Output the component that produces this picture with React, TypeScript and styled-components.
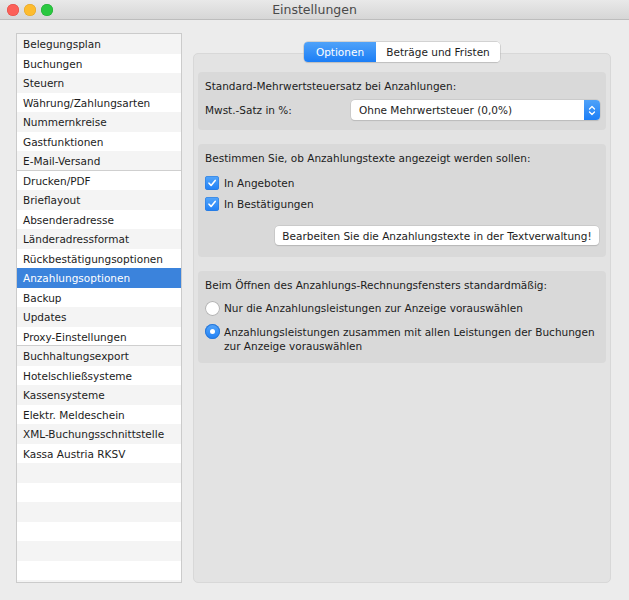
import React from "react";
import styled, { createGlobalStyle } from "styled-components";

const GlobalStyle = createGlobalStyle`
  html, body {
    margin: 0;
    padding: 0;
    background: #ececec;
  }
  body {
    font-family: "DejaVu Sans", "Liberation Sans", sans-serif;
    font-size: 10.5px;
    color: #1c1c1c;
  }
`;

const Window = styled.div`
  width: 629px;
  height: 600px;
  display: flex;
  flex-direction: column;
  background: #ececec;
  overflow: hidden;
`;

const TitleBar = styled.header`
  height: 19px;
  flex-shrink: 0;
  display: grid;
  grid-template-columns: 1fr auto 1fr;
  align-items: center;
  background: linear-gradient(#e9e9e9, #d6d6d6);
  border-bottom: 1px solid #bdbdbd;
`;

const Lights = styled.div`
  display: flex;
  gap: 5px;
  padding-left: 7px;
`;

const Light = styled.span<{ $color: string; $edge: string }>`
  width: 12px;
  height: 12px;
  border-radius: 50%;
  background: ${({ $color }) => $color};
  box-shadow: inset 0 0 0 0.5px ${({ $edge }) => $edge};
`;

const Title = styled.div`
  font-size: 12.5px;
  color: #4a4a4a;
`;

const Body = styled.main`
  flex: 1;
  display: flex;
  gap: 11px;
  padding: 13px 18px 17px 16px;
  min-height: 0;
`;

const Sidebar = styled.nav`
  width: 164px;
  border: 1px solid #cbcbcb;
  background: #fff;
  overflow: hidden;
`;

const Row = styled.div<{ $even: boolean; $active?: boolean; $separator?: boolean }>`
  box-sizing: border-box;
  height: 19.5px;
  padding: 1px 0 0 6px;
  line-height: 18.5px;
  white-space: nowrap;
  background: ${({ $active, $even }) =>
    $active ? "#3b83dc" : $even ? "#f4f4f4" : "#ffffff"};
  color: ${({ $active }) => ($active ? "#fff" : "#1c1c1c")};
  box-shadow: ${({ $separator }) =>
    $separator ? "inset 0 -1px 0 #cfcfcf" : "none"};
`;

const Content = styled.section`
  flex: 1;
  display: flex;
  flex-direction: column;
  padding-top: 9px;
`;

const Segmented = styled.div`
  align-self: center;
  display: flex;
  height: 20px;
  margin-bottom: -9px;
  position: relative;
  z-index: 1;
  border-radius: 4px;
  background: #fff;
  box-shadow: 0 0 0 0.5px #b8b8b8, 0 1px 1px rgba(0, 0, 0, 0.12);
  overflow: hidden;
`;

const Segment = styled.div<{ $active?: boolean; $width: number }>`
  width: ${({ $width }) => $width}px;
  display: flex;
  align-items: center;
  justify-content: center;
  color: ${({ $active }) => ($active ? "#fff" : "#1c1c1c")};
  background: ${({ $active }) =>
    $active ? "linear-gradient(#4fa2f9, #1c7ef6)" : "#fff"};
`;

const TabBox = styled.div`
  flex: 1;
  background: #e3e3e3;
  border: 1px solid #d8d8d8;
  border-radius: 5px;
  padding: 18px 4px;
  display: flex;
  flex-direction: column;
  gap: 14px;
`;

const Group = styled.div<{ $pt: number; $pb: number }>`
  background: #d9d9d9;
  border-radius: 4px;
  padding: ${({ $pt, $pb }) => `${$pt}px 6px ${$pb}px 7px`};
  display: flex;
  flex-direction: column;
`;

const GroupTitle = styled.div`
  line-height: 14px;
  height: 14px;
  white-space: nowrap;
`;

const FieldRow = styled.div`
  display: flex;
  align-items: center;
  margin-top: 7px;
`;

const FieldLabel = styled.div`
  width: 146px;
`;

const Select = styled.div`
  flex: 1;
  height: 20px;
  display: flex;
  align-items: center;
  background: #fff;
  border-radius: 4px;
  box-shadow: 0 0 0 0.5px #bdbdbd, 0 1px 1px rgba(0, 0, 0, 0.15);
  overflow: hidden;
`;

const SelectText = styled.div`
  flex: 1;
  padding-left: 8px;
`;

const Stepper = styled.div`
  width: 16px;
  height: 100%;
  display: flex;
  align-items: center;
  justify-content: center;
  background: linear-gradient(#4fa2f9, #1c7ef6);
`;

const CheckRow = styled.label`
  display: flex;
  align-items: center;
  gap: 5px;
  height: 21px;
`;

const CheckList = styled.div`
  margin-top: 7px;
  display: flex;
  flex-direction: column;
`;

const Box = styled.span`
  width: 14px;
  height: 14px;
  border-radius: 3px;
  display: flex;
  align-items: center;
  justify-content: center;
  background: linear-gradient(#55a6fa, #1f80f6);
  box-shadow: inset 0 0 0 0.5px #2a78d8;
`;

const ButtonRow = styled.div`
  display: flex;
  justify-content: flex-end;
  margin-top: 12px;
  padding-right: 1px;
`;

const Button = styled.div`
  width: 324px;
  height: 19px;
  display: flex;
  align-items: center;
  justify-content: center;
  background: #fff;
  border-radius: 4px;
  box-shadow: 0 0 0 0.5px #bcbcbc, 0 1px 1px rgba(0, 0, 0, 0.18);
  white-space: nowrap;
`;

const RadioList = styled.div`
  margin-top: 9px;
  display: flex;
  flex-direction: column;
  gap: 9px;
`;

const RadioRow = styled.label`
  display: flex;
  align-items: flex-start;
  gap: 4px;
  line-height: 14px;
`;

const Radio = styled.span<{ $checked?: boolean }>`
  width: 15px;
  height: 15px;
  flex-shrink: 0;
  margin-top: -0.5px;
  border-radius: 50%;
  display: flex;
  align-items: center;
  justify-content: center;
  background: ${({ $checked }) =>
    $checked ? "linear-gradient(#55a6fa, #1f80f6)" : "#fff"};
  box-shadow: inset 0 0 0 1px
    ${({ $checked }) => ($checked ? "#2a78d8" : "#b3b3b3")};

  &::after {
    content: "";
    display: ${({ $checked }) => ($checked ? "block" : "none")};
    width: 5px;
    height: 5px;
    border-radius: 50%;
    background: #fff;
  }
`;

const items = [
  "Belegungsplan",
  "Buchungen",
  "Steuern",
  "Währung/Zahlungsarten",
  "Nummernkreise",
  "Gastfunktionen",
  "E-Mail-Versand",
  "Drucken/PDF",
  "Brieflayout",
  "Absenderadresse",
  "Länderadressformat",
  "Rückbestätigungsoptionen",
  "Anzahlungsoptionen",
  "Backup",
  "Updates",
  "Proxy-Einstellungen",
  "Buchhaltungsexport",
  "Hotelschließsysteme",
  "Kassensysteme",
  "Elektr. Meldeschein",
  "XML-Buchungsschnittstelle",
  "Kassa Austria RKSV",
];

const separators = [6, 15];

const Check = () => (
  <svg width="10" height="10" viewBox="0 0 10 10">
    <path
      d="M2 5.2 L4.1 7.4 L8.2 2.4"
      fill="none"
      stroke="#fff"
      strokeWidth="1.6"
      strokeLinecap="round"
      strokeLinejoin="round"
    />
  </svg>
);

const Chevrons = () => (
  <svg width="8" height="13" viewBox="0 0 8 13">
    <path
      d="M1.5 5 L4 2.5 L6.5 5 M1.5 8 L4 10.5 L6.5 8"
      fill="none"
      stroke="#fff"
      strokeWidth="1.3"
      strokeLinecap="round"
      strokeLinejoin="round"
    />
  </svg>
);

const App = () => {
  const rows = Array.from({ length: 29 }, (_, i) => items[i] ?? "");

  return (
    <>
      <GlobalStyle />
      <Window>
        <TitleBar>
          <Lights>
            <Light $color="#fc5f57" $edge="#de4a43" />
            <Light $color="#fdbc2e" $edge="#dfa025" />
            <Light $color="#2ac840" $edge="#1fa832" />
          </Lights>
          <Title>Einstellungen</Title>
          <div />
        </TitleBar>
        <Body>
          <Sidebar>
            {rows.map((label, i) => (
              <Row
                key={i}
                $even={i % 2 === 0}
                $active={label === "Anzahlungsoptionen"}
                $separator={separators.includes(i)}
              >
                {label}
              </Row>
            ))}
          </Sidebar>
          <Content>
            <Segmented>
              <Segment $active $width={72}>
                Optionen
              </Segment>
              <Segment $width={124}>Beträge und Fristen</Segment>
            </Segmented>
            <TabBox>
              <Group $pt={7} $pb={10}>
                <GroupTitle>Standard-Mehrwertsteuersatz bei Anzahlungen:</GroupTitle>
                <FieldRow>
                  <FieldLabel>Mwst.-Satz in %:</FieldLabel>
                  <Select>
                    <SelectText>Ohne Mehrwertsteuer (0,0%)</SelectText>
                    <Stepper>
                      <Chevrons />
                    </Stepper>
                  </Select>
                </FieldRow>
              </Group>
              <Group $pt={7} $pb={12}>
                <GroupTitle>
                  Bestimmen Sie, ob Anzahlungstexte angezeigt werden sollen:
                </GroupTitle>
                <CheckList>
                  <CheckRow>
                    <Box>
                      <Check />
                    </Box>
                    In Angeboten
                  </CheckRow>
                  <CheckRow>
                    <Box>
                      <Check />
                    </Box>
                    In Bestätigungen
                  </CheckRow>
                </CheckList>
                <ButtonRow>
                  <Button>Bearbeiten Sie die Anzahlungstexte in der Textverwaltung!</Button>
                </ButtonRow>
              </Group>
              <Group $pt={7} $pb={10}>
                <GroupTitle>
                  Beim Öffnen des Anzahlungs-Rechnungsfensters standardmäßig:
                </GroupTitle>
                <RadioList>
                  <RadioRow>
                    <Radio />
                    <span>Nur die Anzahlungsleistungen zur Anzeige vorauswählen</span>
                  </RadioRow>
                  <RadioRow>
                    <Radio $checked />
                    <span>
                      Anzahlungsleistungen zusammen mit allen Leistungen der Buchungen
                      <br />
                      zur Anzeige vorauswählen
                    </span>
                  </RadioRow>
                </RadioList>
              </Group>
            </TabBox>
          </Content>
        </Body>
      </Window>
    </>
  );
};

export default App;
